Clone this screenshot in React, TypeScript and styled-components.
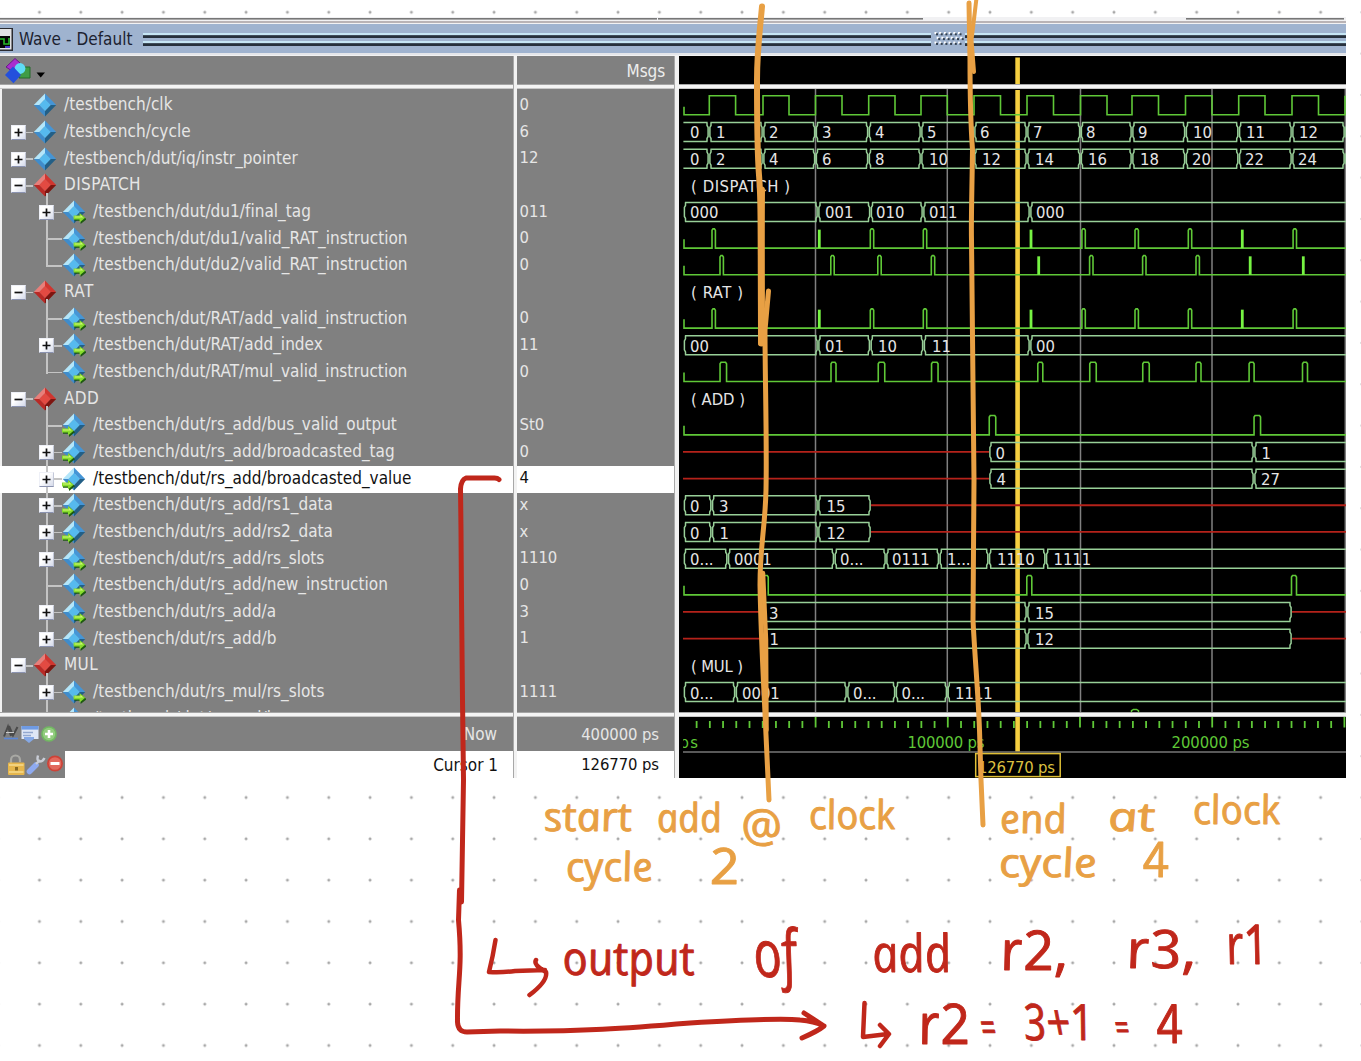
import React from "react";
import styled, { createGlobalStyle, css } from "styled-components";

const UI_FONT = `"DejaVu Sans Condensed", "DejaVu Sans", sans-serif`;
const GREY = "#808080";
const GREEN = "#5fc837";
const BUS = "#98cf98";
const RED = "#b5221a";
const INK_ORANGE = "#e8a044";
const INK_RED = "#c0271b";

const GlobalStyle = createGlobalStyle`
  html, body { margin: 0; padding: 0; background: #fff; overflow: hidden; }
  * { box-sizing: border-box; }
`;

/* ---------- page and window frame ---------- */

const Page = styled.main`
  position: relative;
  width: 1361px;
  height: 1061px;
  overflow: hidden;
  padding-top: 17px;
  background-color: #fff;
  background-image: radial-gradient(circle, #a8a8a8 0.9px, rgba(190, 190, 190, 0) 1.9px);
  background-size: 41.33px 41.33px;
  background-position: 18.8px -8.4px;
  font-family: ${UI_FONT};
  font-stretch: condensed;
  font-size: 17px;
`;

const Window = styled.section`
  width: 1346px;
  display: flex;
  flex-direction: column;
`;

const TopRule = styled.div`
  height: 7px;
  background:
    linear-gradient(#777, #777) 0 1px / 657px 1.6px no-repeat,
    linear-gradient(#777, #777) 658px 1px / 265px 1.6px no-repeat,
    linear-gradient(#777, #777) 1186px 1px / 158px 1.6px no-repeat,
    linear-gradient(#b9b3b5, #b9b3b5) 0 4px / 100% 2px no-repeat,
    #f1f1f3;
`;

const TitleBar = styled.header`
  height: 31px;
  display: flex;
  align-items: center;
  background: #9fb3cf;
  border-bottom: 2px solid #e4e6ea;
  color: #1c2230;
  box-shadow: 0 1px 0 #777;
`;

const TitleText = styled.h1`
  margin: 0 9px 0 5px;
  width: 115px;
  font-size: 17px;
  font-weight: 400;
  letter-spacing: 0.04px;
  white-space: nowrap;
  line-height: 28px;
`;

const GripLines = styled.div<{ $grow?: boolean; $width?: number }>`
  flex: ${(p) => (p.$grow ? "1" : "none")};
  width: ${(p) => (p.$width ? `${p.$width}px` : "auto")};
  height: 14px;
  background:
    linear-gradient(#c6e6f5 0 2px, #26303c 2.6px 4.8px, transparent 5px) 0 1px / 100% 6px no-repeat,
    linear-gradient(#c6e6f5 0 2px, #26303c 2.6px 4.8px, transparent 5px) 0 9px / 100% 6px no-repeat;
`;

const Panes = styled.div`
  display: flex;
  padding-top: 1px;
  background: #f2f2f2;
`;

const Pane = styled.div<{ $width: number }>`
  width: ${(p) => p.$width}px;
  display: flex;
  flex-direction: column;
`;

const Splitter = styled.div<{ $width: number }>`
  width: ${(p) => p.$width}px;
  height: 722px;
  background: #f2f2f2;
  border-left: 1px solid #a8a8a8;
`;

const CrossBar = styled.div`
  height: 5px;
  background: #f4f4f4;
  border-top: 1px solid #a5a5a5;
  border-bottom: 1px solid #c8c8c8;
`;

const Head = styled.div<{ $align?: string }>`
  height: 28px;
  display: flex;
  align-items: center;
  justify-content: ${(p) => p.$align ?? "flex-start"};
  padding: 2px 9px 0 4px;
  background: ${GREY};
  color: #ededed;
  letter-spacing: -0.1px;
`;

const Body = styled.div<{ $edge?: boolean }>`
  height: 623px;
  overflow: hidden;
  padding-top: 3.5px;
  background: ${(p) => (p.$edge ? `linear-gradient(90deg, #f2f2f2 2px, ${GREY} 2px)` : GREY)};
`;

const rowBase = css<{ $active?: boolean }>`
  position: relative;
  height: 26.68px;
  display: flex;
  align-items: center;
  white-space: nowrap;
  color: ${(p) => (p.$active ? "#111" : "#e6e6e6")};
  background: ${(p) => (p.$active ? "#fff" : "transparent")};
`;

const NameRow = styled.div<{ $active?: boolean; $level: number; $guide: string }>`
  ${rowBase}
  padding-left: ${(p) => (p.$level === 1 ? 10.5 : 39)}px;
  &::before {
    content: "";
    position: absolute;
    left: 46px;
    width: 1.5px;
    background: #c4c4c4;
    top: ${(p) => (p.$guide === "start" ? "20px" : "0")};
    bottom: ${(p) => (p.$guide === "end" ? "12px" : "0")};
    display: ${(p) => (p.$guide === "none" ? "none" : "block")};
  }
`;

const ValueRow = styled.div<{ $active?: boolean }>`
  ${rowBase}
  padding: 0 0 3px 2.5px;
  font-size: 16.5px;
`;

const Toggle = styled.span`
  position: relative;
  flex: none;
  width: 15px;
  height: 15px;
  display: grid;
  place-items: center;
  background: linear-gradient(135deg, #fff 40%, #d5daea);
  border: 1px solid #eef0f7;
  border-bottom-color: #8b93b0;
  border-right-color: #c3c8d8;
`;

const ToggleGap = styled.span`
  flex: none;
  width: 15px;
  height: 1.5px;
  background: linear-gradient(90deg, transparent 8px, #c4c4c4 8px);
`;

const Connector = styled.span<{ $width: number; $hidden?: boolean }>`
  flex: none;
  width: ${(p) => p.$width}px;
  height: 1.5px;
  background: ${(p) => (p.$hidden ? "transparent" : "#c4c4c4")};
`;

const Label = styled.span<{ $caps?: boolean; $gap: number }>`
  margin-left: ${(p) => p.$gap}px;
  padding-bottom: 3px;
  letter-spacing: ${(p) => (p.$caps ? "0.4px" : "0.03px")};
`;

const Footer = styled.div<{ $light?: boolean; $h: number; $pad: number; $numeric?: boolean }>`
  height: ${(p) => p.$h}px;
  display: flex;
  align-items: center;
  justify-content: space-between;
  padding-right: ${(p) => p.$pad}px;
  font-size: ${(p) => (p.$numeric ? 16.5 : 17)}px;
  letter-spacing: ${(p) => (p.$numeric ? "-0.08px" : "0")};
  background: ${(p) => (p.$light ? "#fff" : GREY)};
  color: ${(p) => (p.$light ? "#111" : "#e6e6e6")};
`;

const FooterTools = styled.span<{ $width: number }>`
  align-self: stretch;
  width: ${(p) => p.$width}px;
  background: ${GREY};
`;

const Canvas = styled.svg`
  display: block;
  background: #000;
  font-family: ${UI_FONT};
  font-stretch: condensed;
  font-size: 16.5px;
`;

const Icon = styled.svg`
  flex: none;
`;

const Overlay = styled.svg`
  position: absolute;
  left: 0;
  top: 0;
  pointer-events: none;
  font-family: "Open Sans", "Noto Sans", sans-serif;
  font-style: italic;
  font-stretch: normal;
`;

/* ---------- icons ---------- */

type Kind = "signal" | "group" | "out" | "in";

const GreenArrow = ({ x }: { x: number }) => (
  <g transform={`translate(${x} 13)`}>
    <path d="M1 4.2H7V1L13 6.2L7 11V7.8H1Z" fill="#1d5a10" />
    <path d="M0 2.6H6V0L11.6 4.8L6 9.4V6.6H0Z" fill="#86dc2c" />
    <path d="M1 3.6H7V2L9.6 4.4H1Z" fill="#d2f67a" />
  </g>
);

const Diamond = ({ kind }: { kind: Kind }) => {
  const c =
    kind === "group"
      ? ["#e87f7a", "#d0352f", "#b82a26", "#7e1510", "#e24a42"]
      : ["#b4e6fa", "#4595d6", "#3f8ccb", "#235f86", "#56baee"];
  return (
    <Icon width="24" height="25" viewBox="0 0 24 25">
      <path d="M12 .5L.8 12H6.5L12 6.2Z" fill={c[0]} />
      <path d="M12 .5L23.2 12H17.5L12 6.2Z" fill={c[1]} />
      <path d="M.8 12L12 23.5V17.8L6.5 12Z" fill={c[2]} />
      <path d="M23.2 12L12 23.5V17.8L17.5 12Z" fill={c[3]} />
      <path d="M12 6L17.7 12L12 18L6.3 12Z" fill={c[4]} />
      {kind === "out" && <GreenArrow x={11.6} />}
      {kind === "in" && <GreenArrow x={0} />}
    </Icon>
  );
};

const PlusMinus = ({ open }: { open: boolean }) => (
  <Toggle>
    <svg width="9" height="9" viewBox="0 0 9 9">
      <path d={open ? "M.5 4.5H8.5" : "M.5 4.5H8.5M4.5 .5V8.5"} stroke="#111" strokeWidth="1.7" />
    </svg>
  </Toggle>
);

const WindowIcon = () => (
  <svg width="14" height="26" viewBox="0 0 14 26">
    <rect x="-2" y="2" width="15" height="23" fill="#2a2a30" />
    <rect x="-2" y="3" width="13.5" height="20.5" fill="#e2e2e4" />
    <rect x="-2" y="10" width="12" height="12" fill="#050505" />
    <path d="M-1 13H4V18H9V12" stroke="#28b828" strokeWidth="1.6" fill="none" />
    <path d="M5 21H10" stroke="#4a3bc8" strokeWidth="2" />
  </svg>
);

const ObjectsIcon = () => (
  <svg width="44" height="26" viewBox="0 0 44 26">
    <path d="M2 9L11 .5L16 5L8 13Z" fill="#a92fce" stroke="#6b168a" />
    <path d="M15 9H26V20H15Z" fill="#3f9c46" stroke="#256b2b" />
    <circle cx="16" cy="10.5" r="5.4" fill="#5fdcf6" />
    <path d="M9 8.5L17 17L9.5 25.3L1 17Z" fill="#2450dc" />
    <path d="M32.5 14.5H41L36.7 19.5Z" fill="#000" />
  </svg>
);

const Gripper = () => (
  <svg width="34" height="14" viewBox="0 0 34 14">
    {[0, 1, 2].map((r) =>
      Array.from({ length: 6 }, (_, i) => (
        <g key={`${r}-${i}`}>
          <rect x={3.5 + i * 4.7 + (r % 2) * 2.2} y={r * 4.8} width="2" height="2" fill="#fff" />
          <rect x={5 + i * 4.7 + (r % 2) * 2.2} y={1.3 + r * 4.8} width="2" height="2" fill="#33404f" />
        </g>
      ))
    )}
  </svg>
);

const NowTools = () => (
  <svg width="62" height="34" viewBox="0 0 62 34">
    <path d="M4 19.5L8 9.5L11 19M9 9L13 18.5L17.5 10" stroke="#4a4a4a" strokeWidth="2" fill="none" />
    <path d="M6 15.5H14" stroke="#c9c9c9" strokeWidth="1" />
    <path d="M4 21.5H18" stroke="#5b87d8" strokeWidth="1.6" />
    <rect x="21.5" y="9" width="17" height="13" fill="#dfe7f6" />
    <rect x="21.5" y="9" width="17" height="3.6" fill="#6f9be4" />
    <path d="M23 15.5H33M23 18.5H31" stroke="#93a8cf" strokeWidth="1.3" />
    <path d="M24 20H34V22L29 26L24 22Z" fill="#86a9e6" />
    <circle cx="49" cy="17" r="7.8" fill="#71b862" />
    <circle cx="49" cy="17" r="6.2" fill="#93cc7f" />
    <path d="M49 13V21M45 17H53" stroke="#fff" strokeWidth="2.6" />
  </svg>
);

const CursorTools = () => (
  <svg width="65" height="27" viewBox="0 0 65 27">
    <path d="M11 12V9A4.5 4.5 0 0 1 20 9V11" stroke="#a9a9a4" strokeWidth="2.2" fill="none" />
    <rect x="8" y="11.5" width="16.5" height="12.5" rx="1" fill="#e6b64c" />
    <path d="M9 14H23.5M9 21H23.5" stroke="#f6dc8f" strokeWidth="1.3" />
    <rect x="15" y="16" width="3" height="3.5" fill="#8a6a20" />
    <path d="M29.5 20.5L36 14" stroke="#8eaaf0" strokeWidth="5.6" strokeLinecap="round" />
    <path d="M36 13L40 9M38 4.5Q36.5 10 39.5 10.5Q43 10.5 44.5 7" stroke="#c9cdd6" strokeWidth="2.4" fill="none" />
    <circle cx="55" cy="12.5" r="8" fill="#cc4338" />
    <circle cx="55" cy="12.5" r="6.3" fill="#e2695e" />
    <path d="M50.5 12.5H59.5" stroke="#fff" strokeWidth="3" />
  </svg>
);

/* ---------- signal tree data ---------- */

interface Signal {
  name: string;
  value?: string;
  kind: Kind;
  level: 1 | 2;
  toggle?: "plus" | "minus";
  last?: boolean;
  active?: boolean;
}

const group = (name: string): Signal => ({ name, kind: "group", level: 1, toggle: "minus" });
const child = (name: string, value: string, kind: Kind, plus = false, extra: Partial<Signal> = {}): Signal => ({
  name: `/testbench/dut/${name}`,
  value,
  kind,
  level: 2,
  toggle: plus ? "plus" : undefined,
  ...extra,
});

const signals: Signal[] = [
  { name: "/testbench/clk", value: "0", kind: "signal", level: 1 },
  { name: "/testbench/cycle", value: "6", kind: "signal", level: 1, toggle: "plus" },
  { name: "/testbench/dut/iq/instr_pointer", value: "12", kind: "signal", level: 1, toggle: "plus" },
  group("DISPATCH"),
  child("du1/final_tag", "011", "out", true),
  child("du1/valid_RAT_instruction", "0", "out"),
  child("du2/valid_RAT_instruction", "0", "out", false, { last: true }),
  group("RAT"),
  child("RAT/add_valid_instruction", "0", "out"),
  child("RAT/add_index", "11", "out", true),
  child("RAT/mul_valid_instruction", "0", "out", false, { last: true }),
  group("ADD"),
  child("rs_add/bus_valid_output", "St0", "in"),
  child("rs_add/broadcasted_tag", "0", "in", true),
  child("rs_add/broadcasted_value", "4", "in", true, { active: true }),
  child("rs_add/rs1_data", "x", "in", true),
  child("rs_add/rs2_data", "x", "in", true),
  child("rs_add/rs_slots", "1110", "out", true),
  child("rs_add/new_instruction", "0", "out"),
  child("rs_add/a", "3", "out", true),
  child("rs_add/b", "1", "out", true, { last: true }),
  group("MUL"),
  child("rs_mul/rs_slots", "1111", "out", true),
  child("rs_mul/b", "", "out"),
];

const guideOf = (s: Signal) => (s.kind === "group" ? "start" : s.level === 1 ? "none" : s.last ? "end" : "full");

const SignalRow = ({ s }: { s: Signal }) => (
  <NameRow $active={s.active} $level={s.level} $guide={guideOf(s)}>
    {s.toggle && <PlusMinus open={s.toggle === "minus"} />}
    {!s.toggle && s.level === 2 && <ToggleGap />}
    {!s.toggle && s.level === 1 ? <Connector $width={22.5} $hidden /> : <Connector $width={7.5} />}
    <Diamond kind={s.kind} />
    <Label $caps={s.kind === "group"} $gap={s.level === 1 ? 7 : 7.5}>
      {s.name}
    </Label>
  </NameRow>
);

/* ---------- waveforms ---------- */

const START = 684;
const END = 1346;
const hi = (row: number) => 95.8 + 26.67 * row;
const lo = (row: number) => hi(row) + 19;

const Clock = () => {
  const edges = [
    709.3, 735.6, 763, 789, 815.5, 842, 868.7, 895, 921, 947.3, 974, 1000.5, 1027, 1053.5, 1080.5, 1107, 1132,
    1158.5, 1185.5, 1212, 1238.7, 1265, 1292, 1318.5, 1345,
  ];
  let d = `M${START} ${lo(0) - 8}V${lo(0)}`;
  edges.forEach((x, i) => {
    d += `H${x}V${i % 2 ? lo(0) : hi(0)}`;
  });
  return <path d={d} stroke={GREEN} strokeWidth="1.6" fill="none" />;
};

type Pulse = [number, number];

const Pulses = ({ row, at }: { row: number; at: Pulse[] }) => {
  const b = lo(row);
  const t = hi(row);
  return (
    <g fill="none" stroke={GREEN} strokeWidth="1.6">
      <path
        d={
          `M${START} ${b - 9}V${b}` +
          at
            .filter((p) => p[1] > 0)
            .map(([x, w]) => `H${x - w / 2}V${t + 1.2}L${x - w / 2 + 1} ${t - 0.3}H${x + w / 2 - 1}L${x + w / 2} ${t + 1.2}V${b}`)
            .join("") +
          `H${END}`
        }
      />
      {at
        .filter((p) => p[1] === 0)
        .map(([x]) => (
          <path key={x} d={`M${x} ${t + 0.5}V${b}`} stroke="#76f343" strokeWidth="2.8" />
        ))}
    </g>
  );
};

interface BusProps {
  row: number;
  from: number;
  cuts: number[];
  end?: number;
  labels: [number, string][];
  openStart?: boolean;
}

const Bus = ({ row, from, cuts, end, labels, openStart }: BusProps) => {
  const t = hi(row);
  const b = lo(row);
  const left = (x: number) => `M${x + 2} ${t}V${t + 3}L${x + 0.9} ${t + 5}V${b - 5}L${x + 2} ${b - 3}V${b}`;
  const right = (x: number) => `M${x - 2} ${t}V${t + 3}L${x - 0.9} ${t + 5}V${b - 5}L${x - 2} ${b - 3}V${b}`;
  const stops = [from, ...cuts, end ?? END + 4];
  let d = "";
  stops.slice(0, -1).forEach((x, i) => {
    const n = stops[i + 1];
    d += `M${x + 1.4} ${t}H${n - 1.4}M${x + 1.4} ${b}H${n - 1.4}`;
    if (!(i === 0 && openStart)) d += left(x);
    if (i < stops.length - 2 || end) d += right(n);
  });
  return (
    <g>
      <path d={d} stroke={BUS} strokeWidth="1.5" fill="none" />
      {labels.map(([x, text]) => (
        <text key={x} x={x - 1} y={t + 16} fill="#e6e6e6">
          {text}
        </text>
      ))}
    </g>
  );
};

const Unknown = ({ row, from, to }: { row: number; from: number; to: number }) => (
  <path d={`M${from} ${hi(row) + 9.4}H${to}`} stroke={RED} strokeWidth="1.8" />
);

const Heading = ({ row, text, width }: { row: number; text: string; width: number }) => (
  <text x="691" y={hi(row) + 15.7} fill="#e6e6e6" textLength={width}>
    {text}
  </text>
);

const steps = [709, 763, 815.5, 868.5, 921, 974, 1027, 1080.5, 1132, 1185.5, 1238.7, 1292, 1345];
const labelX = [691, 717, 770, 823, 876, 928, 981, 1034, 1087, 1139, 1194, 1247, 1300];
const pointerX = [691, 717, 770, 823, 876, 930, 983, 1036, 1089, 1141, 1193, 1246, 1299];
const label = (xs: number[], values: number[]): [number, string][] => xs.map((x, i) => [x, String(values[i])]);
const validPulses: Pulse[] = [
  [713.7, 3.4], [819.3, 0], [872, 3.4], [925, 3.4], [1031, 0], [1083.6, 3.4], [1136.7, 3.4], [1190, 3.4], [1242.3, 0], [1294.8, 3.4],
];
const gridX = [815.5, 947.3, 1080.5, 1212, 1345.3];

const WaveCanvas = () => (
  <Canvas width="667" height="623" viewBox="679 89 667 623">
    {gridX.map((x) => (
      <path key={x} d={`M${x} 88V712`} stroke="#808080" strokeWidth="1.5" />
    ))}
    <path d="M1017.6 90V712" stroke="#f5cf40" strokeWidth="4.6" />
    <Clock />
    <Bus row={1} from={682} openStart cuts={steps} labels={label(labelX, [0, 1, 2, 3, 4, 5, 6, 7, 8, 9, 10, 11, 12])} />
    <Bus row={2} from={682} openStart cuts={steps} labels={label(pointerX, [0, 2, 4, 6, 8, 10, 12, 14, 16, 18, 20, 22, 24])} />
    <Heading row={3} text="( DISPATCH )" width={99} />
    <Bus row={4} from={683.5} cuts={[818, 870.5, 923, 1030]} labels={[[691, "000"], [826, "001"], [877, "010"], [930, "011"], [1037, "000"]]} />
    <Pulses row={5} at={validPulses} />
    <Pulses
      row={6}
      at={[[721.7, 3.4], [832.5, 3.4], [879.5, 3.4], [933, 3.4], [1038.7, 0], [1091.3, 3.4], [1144.3, 3.4], [1197.7, 3.4], [1250.2, 0], [1303.3, 0]]}
    />
    <Heading row={7} text="( RAT )" width={52} />
    <Pulses row={8} at={validPulses} />
    <Bus row={9} from={683.5} cuts={[818, 870.3, 923.5, 1030]} labels={[[691, "00"], [826, "01"], [879, "10"], [933, "11"], [1037, "00"]]} />
    <Pulses
      row={10}
      at={[[723.3, 6.5], [833.5, 5], [881.5, 6.5], [934.8, 6.5], [1040.3, 5], [1093, 6.5], [1146, 6.5], [1198.5, 5], [1251.6, 5], [1305, 5]]}
    />
    <Heading row={11} text="( ADD )" width={54} />
    <Pulses row={12} at={[[992.5, 6.5], [1257.3, 6.5]]} />
    <Unknown row={13} from={683} to={989} />
    <Bus row={13} from={989} cuts={[1254]} labels={[[996.5, "0"], [1262.5, "1"]]} />
    <Unknown row={14} from={683} to={989} />
    <Bus row={14} from={989} cuts={[1254]} labels={[[997.5, "4"], [1262, "27"]]} />
    <Bus row={15} from={683.5} cuts={[711.7, 818]} end={871} labels={[[691, "0"], [720, "3"], [827.5, "15"]]} />
    <Unknown row={15} from={871} to={END} />
    <Bus row={16} from={683.5} cuts={[711.7, 818]} end={871} labels={[[691, "0"], [720.5, "1"], [827.5, "12"]]} />
    <Unknown row={16} from={871} to={END} />
    <Bus
      row={17}
      from={683.5}
      cuts={[727.7, 834.3, 886, 939.3, 988.7, 1045.7]}
      labels={[[691, "0..."], [735, "0001"], [841, "0..."], [893, "0111"], [948, "1..."], [998, "1110"], [1054.5, "1111"]]}
    />
    <Pulses row={18} at={[[765.5, 5.5], [1029.3, 5], [1294, 5]]} />
    <Unknown row={19} from={683} to={763} />
    <Bus row={19} from={763} cuts={[1027]} end={1292} labels={[[770, "3"], [1036, "15"]]} />
    <Unknown row={19} from={1292} to={END} />
    <Unknown row={20} from={683} to={763} />
    <Bus row={20} from={763} cuts={[1027]} end={1292} labels={[[770.5, "1"], [1036, "12"]]} />
    <Unknown row={20} from={1292} to={END} />
    <Heading row={21} text="( MUL )" width={52} />
    <Bus
      row={22}
      from={683.5}
      cuts={[735.5, 847, 895.5, 947.3]}
      labels={[[691, "0..."], [743, "0001"], [854, "0..."], [902.5, "0..."], [956, "1111"]]}
    />
    <path d="M1131.5 712V710.7L1133.5 709.4H1136.5L1138.5 710.7V712" stroke={GREEN} strokeWidth="1.5" fill="none" />
  </Canvas>
);

const Timeline = () => (
  <Canvas width="667" height="61" viewBox="679 717 667 61">
    {Array.from({ length: 50 }, (_, i) => {
      const major = (i + 1) % 10 === 0;
      const x = 683.4 + 13.22 * (i + 1);
      return <path key={i} d={`M${x} ${major ? 717 : 721}V${major ? 727.5 : 728}`} stroke={GREEN} strokeWidth="1.8" />;
    })}
    <svg x="683" y="728" width="40" height="26" viewBox="683 728 40 26">
      <text x="679.5" y="747.5" fill={GREEN} textLength="18.5">ps</text>
    </svg>
    <text x="907.5" y="747.5" fill={GREEN} textLength="77">100000 ps</text>
    <text x="1171.5" y="747.5" fill={GREEN} textLength="78">200000 ps</text>
    <path d="M683 752H1346" stroke="#777" strokeWidth="1.6" />
    <path d="M1017.6 717V751.3" stroke="#f5cf40" strokeWidth="4.6" />
    <rect x="975.7" y="753.6" width="84.5" height="23" fill="#000" stroke="#e0c036" strokeWidth="1.5" />
    <text x="978" y="772.5" fill="#dcc040" textLength="77">126770 ps</text>
  </Canvas>
);

/* ---------- pen annotations ---------- */

interface WordProps {
  x: number;
  y: number;
  w: number;
  size: number;
  color: string;
  children: string;
}

const Word = ({ x, y, w, size, color, children }: WordProps) => (
  <text
    transform={`translate(${x} ${y}) skewX(11)`}
    fontSize={size}
    textLength={w}
    lengthAdjust="spacingAndGlyphs"
    fill={color}
    stroke={color}
    strokeWidth="0.9"
    strokeLinejoin="round"
  >
    {children}
  </text>
);

const orangeWords: [number, number, number, number, string][] = [
  [546, 831, 88, 40, "start"],
  [659, 832, 65, 40, "add"],
  [744, 842, 40, 46, "@"],
  [811, 829, 86, 40, "clock"],
  [568, 881, 87, 40, "cycle"],
  [712, 884, 30, 50, "2"],
  [1002, 833, 67, 40, "end"],
  [1110, 831, 47, 40, "at"],
  [1195, 824, 87, 40, "clock"],
  [1001, 877, 98, 40, "cycle"],
  [1145, 877, 26, 49, "4"],
];

const redWords: [number, number, number, number, string][] = [
  [565, 975, 132, 47, "output"],
  [757, 977, 44, 66, "of"],
  [875, 972, 79, 52, "add"],
  [1003, 970, 68, 55, "r2,"],
  [1129, 968, 70, 53, "r3,"],
  [1229, 964, 42, 55, "r1"],
  [921, 1044, 52, 56, "r2"],
  [983, 1042, 15, 42, "="],
  [1026, 1040, 70, 50, "3+1"],
  [1117, 1040, 14, 36, "="],
  [1159, 1043, 26, 54, "4"],
];

const Annotations = () => (
  <Overlay width="1361" height="1061" viewBox="0 0 1361 1061">
    <g fill="none" stroke={INK_ORANGE} strokeLinecap="round" strokeLinejoin="round">
      <path d="M762 6.5C760 30 757 50 757 80C757 120 757 150 759 175C761 200 761 230 761 343" strokeWidth="6" />
      <path d="M761.5 190C761 240 761.5 290 761.5 343" strokeWidth="7" />
      <path d="M768.5 291L765 330C765 380 767 440 766 490C765 530 760 545 760 585C761 640 764 690 766 735L769 800" strokeWidth="5" />
      <path d="M763 573L766 640L766.5 730" strokeWidth="4.5" />
      <path d="M763.5 310L763.5 343" strokeWidth="5" />
      <path d="M969 3L970 60C970 90 970 115 972.5 150C972 190 971 220 971.5 240L974 480L973 620C975 660 978 690 979.5 730L981 780L983 825" strokeWidth="5" />
      <path d="M976.5 -2L971.5 40L974 72" strokeWidth="4" />
    </g>
    <g fill="none" stroke={INK_RED} strokeWidth="5" strokeLinecap="round" strokeLinejoin="round">
      <path d="M499 479.5Q497 477.5 493 478H466Q461 480 460.5 489L461 530L461.5 600L462.5 700L463.5 780L461.5 902" />
      <path d="M459.5 890L458.5 920C463 970 457 980 457.5 1022Q458 1032 467 1032L500 1031C580 1032 630 1028 690 1023C740 1020 780 1018 800 1020Q814 1021 824 1026Q818 1031 802 1038M804 1013L824 1026" />
      <path d="M495.5 940Q493 956 489 972Q500 973 515 971L545 970M536 960Q533 965 546 972Q548 981 529.5 995" strokeWidth="4.5" />
      <path d="M864.5 1003L863 1037L888 1034M880 1025L889 1034L880 1046" strokeWidth="4.5" />
    </g>
    {orangeWords.map(([x, y, w, size, t]) => (
      <Word key={`${x}`} x={x} y={y} w={w} size={size} color={INK_ORANGE}>
        {t}
      </Word>
    ))}
    {redWords.map(([x, y, w, size, t]) => (
      <Word key={`${x}`} x={x} y={y} w={w} size={size} color={INK_RED}>
        {t}
      </Word>
    ))}
  </Overlay>
);

export default function App() {
  return (
    <Page>
      <GlobalStyle />
      <Window>
        <TopRule />
        <TitleBar>
          <WindowIcon />
          <TitleText>Wave - Default</TitleText>
          <GripLines $width={788} />
          <Gripper />
          <GripLines $grow />
        </TitleBar>
        <Panes>
          <Pane $width={513}>
            <Head>
              <ObjectsIcon />
            </Head>
            <CrossBar />
            <Body $edge>
              {signals.map((s) => (
                <SignalRow key={s.name} s={s} />
              ))}
            </Body>
            <CrossBar />
            <Footer $h={34} $pad={16}>
              <NowTools />
              <span>Now</span>
            </Footer>
            <Footer $light $h={27} $pad={15}>
              <FooterTools $width={64.5}>
                <CursorTools />
              </FooterTools>
              <span>Cursor 1</span>
            </Footer>
          </Pane>
          <Splitter $width={4} />
          <Pane $width={157}>
            <Head $align="flex-end">Msgs</Head>
            <CrossBar />
            <Body>
              {signals.map((s) => (
                <ValueRow key={s.name} $active={s.active}>
                  {s.value}
                </ValueRow>
              ))}
            </Body>
            <CrossBar />
            <Footer $h={34} $pad={15} $numeric>
              <span />
              <span>400000 ps</span>
            </Footer>
            <Footer $light $h={27} $pad={15} $numeric>
              <span />
              <span>126770 ps</span>
            </Footer>
          </Pane>
          <Splitter $width={5} />
          <Pane $width={667}>
            <Canvas width="667" height="28" viewBox="679 56 667 28">
              <path d="M1017.6 57.5V84" stroke="#f5cf40" strokeWidth="4.6" />
            </Canvas>
            <CrossBar />
            <WaveCanvas />
            <CrossBar />
            <Timeline />
          </Pane>
        </Panes>
      </Window>
      <Annotations />
    </Page>
  );
}
